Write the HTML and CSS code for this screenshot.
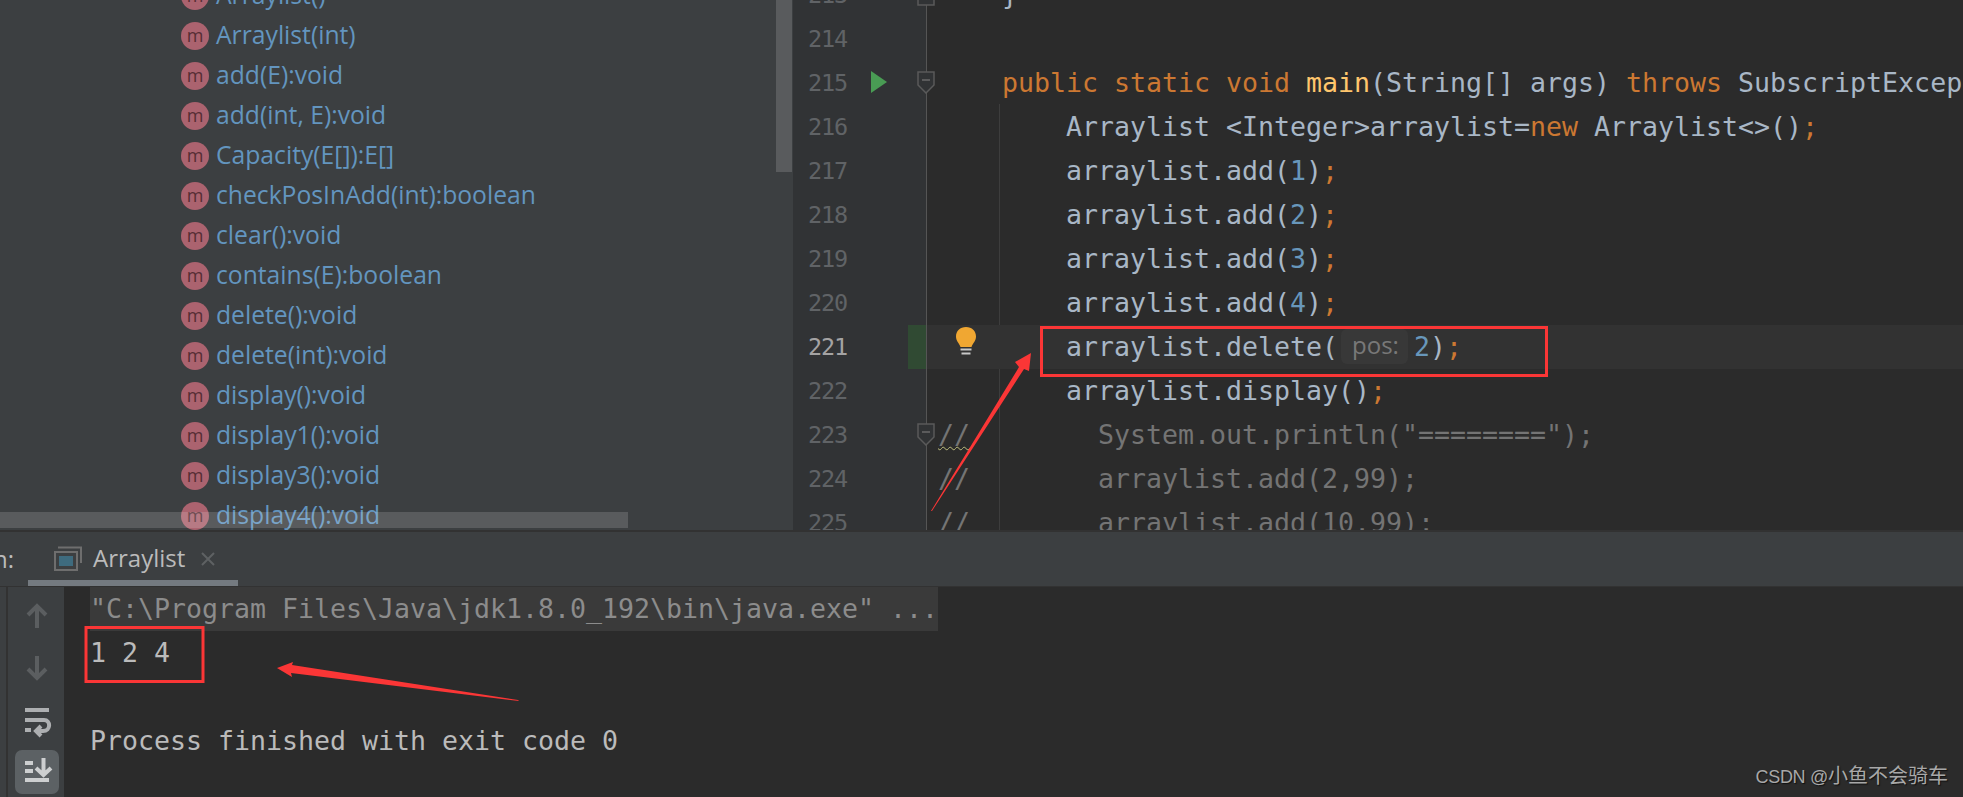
FILE: index.html
```html
<!DOCTYPE html>
<html lang="en">
<head>
<meta charset="utf-8">
<title>Arraylist</title>
<link rel="stylesheet" href="styles.css">
</head>
<body>
<div class="top">
  <aside class="structure">
    <ul class="methods">
      <li class="method"><span class="m">m</span>Arraylist()</li>
      <li class="method"><span class="m">m</span>Arraylist(int)</li>
      <li class="method"><span class="m">m</span>add(E):void</li>
      <li class="method"><span class="m">m</span>add(int, E):void</li>
      <li class="method"><span class="m">m</span>Capacity(E[]):E[]</li>
      <li class="method"><span class="m">m</span>checkPosInAdd(int):boolean</li>
      <li class="method"><span class="m">m</span>clear():void</li>
      <li class="method"><span class="m">m</span>contains(E):boolean</li>
      <li class="method"><span class="m">m</span>delete():void</li>
      <li class="method"><span class="m">m</span>delete(int):void</li>
      <li class="method"><span class="m">m</span>display():void</li>
      <li class="method"><span class="m">m</span>display1():void</li>
      <li class="method"><span class="m">m</span>display3():void</li>
      <li class="method"><span class="m">m</span>display4():void</li>
    </ul>
    <div class="vscroll"></div>
    <div class="hscroll"></div>
  </aside>
  <main class="editor">
    <div class="guide"></div>
    <div class="lines">
      <div class="row"><div class="gutter"><span class="num">213</span><svg class="fold" viewBox="0 0 18 23"><path class="fold-shape" d="M1 22H17V9L9 1 1 9Z"/></svg></div><pre class="code">    <i class="id">}</i></pre></div>
      <div class="row"><div class="gutter"><span class="num">214</span></div><pre class="code"></pre></div>
      <div class="row"><div class="gutter"><span class="num">215</span><svg class="run" viewBox="0 0 16 22"><path d="M0 0L16 11 0 22Z"/></svg><svg class="fold" viewBox="0 0 18 23"><path class="fold-shape" d="M1 1H17V14L9 22 1 14Z"/><path class="fold-minus" d="M5 9H13"/></svg></div><pre class="code">    <b class="kw">public static void </b><b class="fn">main</b>(String[] args) <b class="kw">throws </b>SubscriptException {</pre></div>
      <div class="row"><div class="gutter"><span class="num">216</span></div><pre class="code">        Arraylist &lt;Integer&gt;arraylist=<b class="kw">new </b>Arraylist&lt;&gt;()<b class="kw">;</b></pre></div>
      <div class="row"><div class="gutter"><span class="num">217</span></div><pre class="code">        arraylist.add(<b class="lit">1</b>)<b class="kw">;</b></pre></div>
      <div class="row"><div class="gutter"><span class="num">218</span></div><pre class="code">        arraylist.add(<b class="lit">2</b>)<b class="kw">;</b></pre></div>
      <div class="row"><div class="gutter"><span class="num">219</span></div><pre class="code">        arraylist.add(<b class="lit">3</b>)<b class="kw">;</b></pre></div>
      <div class="row"><div class="gutter"><span class="num">220</span></div><pre class="code">        arraylist.add(<b class="lit">4</b>)<b class="kw">;</b></pre></div>
      <div class="row current"><div class="gutter"><span class="num">221</span><span class="changed"></span></div><pre class="code">        arraylist.delete(<span class="hint">pos:</span><b class="lit">2</b>)<b class="kw">;</b></pre><svg class="bulb" viewBox="0 0 20 28"><path d="M10 0C4 0 0 4 0 9.500C0 14 3 16 4.500 20H15.500C17 16 20 14 20 9.500C20 4 16 0 10 0Z"/><path class="bulb-base" d="M4.500 22.500H15.500M5.500 26.500H14.500"/></svg></div>
      <div class="row"><div class="gutter"><span class="num">222</span></div><pre class="code">        arraylist.display()<b class="kw">;</b></pre></div>
      <div class="row"><div class="gutter"><span class="num">223</span><svg class="fold" viewBox="0 0 18 23"><path class="fold-shape" d="M1 1H17V14L9 22 1 14Z"/><path class="fold-minus" d="M5 9H13"/></svg></div><pre class="code com"><span class="warn">//</span>        System.out.println("========");</pre></div>
      <div class="row"><div class="gutter"><span class="num">224</span></div><pre class="code com">//        arraylist.add(2,99);</pre></div>
      <div class="row"><div class="gutter"><span class="num">225</span></div><pre class="code com">//        arraylist.add(10,99);</pre></div>
    </div>
  </main>
</div>
<section class="tool">
  <header class="tabs">
    <span class="tool-title">Run:</span>
    <div class="tab">
      <svg class="tab-icon" viewBox="0 0 28 26"><path class="win-back" d="M4 2.500H27V18"/><rect class="win-front" x="1" y="7" width="22" height="18"/><rect class="win-fill" x="5" y="11" width="14" height="10"/></svg>
      <span class="tab-name">Arraylist</span>
      <svg class="tab-close" viewBox="0 0 14 14"><path d="M1 1L13 13M13 1L1 13"/></svg>
    </div>
  </header>
  <div class="run-body">
    <div class="strip"></div>
    <nav class="toolbar">
      <svg class="tbtn" viewBox="0 0 44 44"><path class="dim" d="M22 13V34M13 21L22 12 31 21"/></svg>
      <svg class="tbtn" viewBox="0 0 44 44"><path class="dim" d="M22 10V31M13 23L22 32 31 23"/></svg>
      <svg class="tbtn" viewBox="0 0 44 44"><path class="lite" d="M10 12H34M10 22H29C36 22 36 33 28 33H22M26 28L21 33 26 38M10 32H16"/></svg>
      <svg class="tbtn active" viewBox="0 0 44 44"><path class="lite" d="M10 13H18M10 21H18M28.500 8V24M21 18L28.500 25 36 18M10 30H34"/></svg>
    </nav>
    <div class="console">
      <pre class="out cmd">"C:\Program Files\Java\jdk1.8.0_192\bin\java.exe" ...</pre>
      <pre class="out">1 2 4</pre>
      <pre class="out"> </pre>
      <pre class="out">Process finished with exit code 0</pre>
    </div>
  </div>
</section>
<svg class="marks" viewBox="0 0 1963 797">
  <rect class="mark-box" x="1041.500" y="327.500" width="505" height="48"/>
  <rect class="mark-box" x="86" y="627.500" width="117" height="54"/>
  <path class="mark-arrow" d="M931 511L1019 367 1015 362 1031 353 1029 371 1024 369 932 511Z"/>
  <path class="mark-arrow" d="M277 668L293 662 292 665 518 700 519 701 291 673 292 677Z"/>
</svg>
<div class="watermark">CSDN @<span class="wm-cjk">小鱼不会骑车</span></div>
</body>
</html>
```
FILE: styles.css
```css
* { box-sizing: border-box; }
html, body { margin: 0; padding: 0; }
body {
  position: relative;
  width: 1963px;
  height: 797px;
  overflow: hidden;
  background: #2b2b2b;
  font-family: "Open Sans", "Liberation Sans", sans-serif;
}
.top { display: flex; height: 530px; overflow: hidden; }
.structure {
  position: relative;
  flex: 0 0 793px;
  background: #3c3f41;
  overflow: hidden;
}
.methods { list-style: none; margin: -24px 0 0; padding: 0 0 0 181px; }
.method {
  display: flex;
  align-items: center;
  gap: 7px;
  height: 40px;
  padding-bottom: 4px;
  font-size: 24.700px;
  color: #6395bf;
  white-space: nowrap;
}
.m {
  flex: 0 0 28px;
  height: 28px;
  margin-top: 4px;
  border-radius: 50%;
  background: #ab636f;
  color: #562d34;
  font-size: 18px;
  line-height: 26px;
  text-align: center;
}
.vscroll {
  position: absolute;
  top: 0;
  right: 1px;
  width: 16px;
  height: 172px;
  background: rgba(255, 255, 255, 0.15);
}
.hscroll {
  position: absolute;
  left: 0;
  top: 512px;
  width: 628px;
  height: 16px;
  background: rgba(255, 255, 255, 0.15);
}
.editor { position: relative; flex: 1; min-width: 0; overflow: hidden; }
.guide {
  position: absolute;
  left: 206px;
  top: 104px;
  bottom: 0;
  width: 1px;
  background: #3d3d3d;
}
.lines { margin-top: -27px; }
.row { position: relative; display: flex; height: 44px; }
.gutter {
  position: relative;
  flex: 0 0 134px;
  height: 44px;
  padding-left: 15px;
  background: #313335;
  border-right: 1px solid #555555;
}
.num {
  font-family: "DejaVu Sans Mono", monospace;
  font-size: 23.500px;
  letter-spacing: -1.100px;
  line-height: 44px;
  color: #606366;
}
.code {
  margin: 0;
  padding-left: 11px;
  font-family: "DejaVu Sans Mono", monospace;
  font-size: 26.580px;
  line-height: 44px;
  color: #a9b7c6;
  white-space: pre;
}
.code b, .code i { font-weight: normal; font-style: normal; }
.kw { color: #cc7832; }
.fn { color: #ffc66d; }
.lit { color: #6897bb; }
.com { color: #747474; }
.warn { text-decoration: underline wavy #bdbd7c 1px; text-underline-offset: 2px; }
.run { position: absolute; left: 78px; top: 10px; width: 16px; height: 22px; fill: #499c54; }
.fold { position: absolute; left: 124px; top: 10px; width: 18px; height: 23px; z-index: 1; }
.fold-shape { fill: #313335; stroke: #5a5a5a; stroke-width: 1.500; }
.fold-minus { fill: none; stroke: #6a6a6a; stroke-width: 1.500; }
.current { background: #323232; }
.current .num { color: #a4a3a3; }
.changed {
  position: absolute;
  left: 115px;
  top: 0;
  width: 18px;
  height: 44px;
  background: #304a33;
}
.hint {
  display: inline-block;
  width: 67px;
  height: 35px;
  margin: 4px 6px 0 3px;
  padding-left: 11px;
  border-radius: 6px;
  background: #383838;
  color: #787878;
  font-family: "Open Sans", sans-serif;
  font-size: 24px;
  line-height: 31px;
  vertical-align: top;
}
.bulb { position: absolute; left: 163px; top: 2px; width: 20px; height: 28px; fill: #f0a732; }
.bulb-base { fill: none; stroke: #c8c8c8; stroke-width: 2; }
.tool { height: 267px; background: #3c3f41; border-top: 2px solid #323232; }
.tabs {
  display: flex;
  align-items: flex-start;
  height: 55px;
  border-bottom: 1px solid #323232;
  overflow: hidden;
}
.tool-title {
  display: flex;
  justify-content: flex-end;
  flex: 0 0 14px;
  min-width: 0;
  margin-right: 14px;
  font-size: 24px;
  line-height: 54px;
  color: #bbbbbb;
  white-space: nowrap;
}
.tab {
  display: flex;
  align-items: center;
  flex: 0 0 210px;
  height: 54px;
  padding: 3px 0 0 26px;
  border-bottom: 6px solid #747a80;
}
.tab-icon { flex: 0 0 28px; width: 28px; height: 26px; margin-right: 11px; }
.win-back, .win-front { fill: none; stroke: #6e6e6e; stroke-width: 2; }
.win-fill { fill: #3e6b7e; }
.tab-name { font-size: 24px; color: #bbbbbb; }
.tab-close { width: 14px; height: 14px; margin-left: 16px; margin-top: 3px; fill: none; stroke: #5e6163; stroke-width: 2; }
.run-body { display: flex; height: 210px; }
.strip { flex: 0 0 6px; background: #3c3f41; }
.toolbar {
  display: flex;
  flex-direction: column;
  align-items: center;
  gap: 8px;
  flex: 0 0 58px;
  padding: 7px 0 0 2px;
  background: #3c3f41;
  border-left: 2px solid #323232;
}
.tbtn { width: 44px; height: 44px; flex: none; }
.dim { fill: none; stroke: #5b5e60; stroke-width: 4; }
.lite { fill: none; stroke: #adafb1; stroke-width: 4; }
.active { background: #5c6164; border-radius: 7px; }
.active .lite { stroke: #cdcfd0; }
.console { flex: 1; min-width: 0; padding-left: 26px; background: #2b2b2b; }
.out {
  margin: 0;
  height: 44px;
  font-family: "DejaVu Sans Mono", monospace;
  font-size: 26.580px;
  line-height: 44px;
  color: #bbbbbb;
  white-space: pre;
}
.cmd { width: 848px; background: #3a3a3a; color: #8c8c8c; }
.marks { position: absolute; left: 0; top: 0; width: 1963px; height: 797px; pointer-events: none; }
.mark-box { fill: none; stroke: #fb3636; stroke-width: 3; }
.mark-arrow { fill: #fb3636; }
.watermark {
  position: absolute;
  right: 15px;
  bottom: 8px;
  font-family: "Liberation Sans", "Noto Sans CJK SC", sans-serif;
  font-size: 18px;
  letter-spacing: -0.300px;
  color: #a8a8a8;
  text-shadow: 1px 1px 1px #111111;
  white-space: pre;
}
.wm-cjk { font-family: "Noto Sans CJK SC", sans-serif; font-size: 20px; letter-spacing: 0; }
```
